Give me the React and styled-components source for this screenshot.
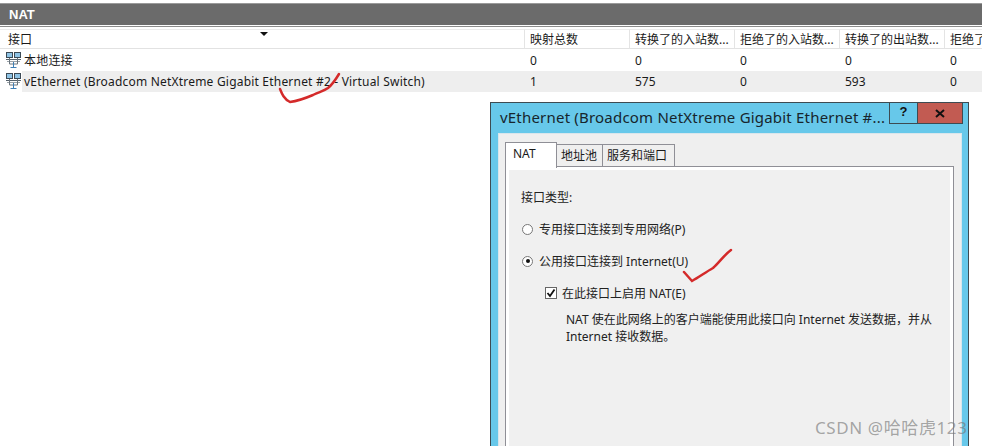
import React from 'react'
import styled, { createGlobalStyle } from 'styled-components'

const Global = createGlobalStyle`
  html, body { margin: 0; padding: 0; background: #fff; overflow: hidden; }
  body { font-family: "Noto Sans", "Noto Sans CJK SC", sans-serif; color: #1a1a1a; }
`
const Page = styled.div`
  position: relative;
  width: 982px;
  height: 446px;
  overflow: hidden;
  background: #fff;
`
const TitleBar = styled.div`
  margin-top: 3px;
  height: 23px;
  box-sizing: border-box;
  border-top: 1px solid #9a9a9a;
  background: #6b6b6b;
  color: #fff;
  font: bold 13px/21px "Liberation Sans", sans-serif;
  padding-left: 9px;
  border-bottom: 1px solid #fff;
  box-shadow: 0 1px 0 #8c8c8c;
`
const Table = styled.div`
  margin-top: 3px;
  display: grid;
  grid-template-columns: 524px 105px 105px 105px 105px 1fr;
  font-size: 12px;
`
const HeadCell = styled.div`
  height: 20px;
  box-sizing: border-box;
  line-height: 20px;
  padding-left: ${p => p.$pad || 5}px;
  white-space: nowrap;
  overflow: hidden;
  position: relative;
  border-left: ${p => (p.$first ? 'none' : '1px solid #e4e4e4')};
  border-top: 1px solid #ececec;
  border-bottom: 1px solid #e2e2e2;
  margin-bottom: 1px;
`
const Sort = styled.span`
  position: absolute;
  left: 260px;
  top: 2px;
  width: 0;
  height: 0;
  border-left: 4px solid transparent;
  border-right: 4px solid transparent;
  border-top: 4px solid #111;
`
const Cell = styled.div`
  height: 21px;
  line-height: 21px;
  padding-left: 6px;
  white-space: nowrap;
  background: ${p => (p.$shaded ? '#eeeeee' : '#fff')};
`
const NameCell = styled(Cell)`
  display: flex;
  align-items: center;
  letter-spacing: 0.2px;
  background: #fff;
`
const NameText = styled.span`
  background: ${p => (p.$shaded ? '#eeeeee' : 'transparent')};
  flex: 1;
  height: 100%;
  padding-left: 2px;
`
const Dialog = styled.div`
  position: absolute;
  left: 490px;
  top: 102px;
  width: 479px;
  height: 350px;
  background: #67c8ea;
  border: 1px solid #3d4b52;
  padding: 0 6px 0 7px;
  box-sizing: border-box;
`
const DialogTitle = styled.div`
  height: 30px;
  font-size: 15px;
  line-height: 28px;
  padding-left: 2px;
  color: #17252c;
  white-space: nowrap;
  letter-spacing: 0.2px;
`
const Controls = styled.div`
  position: absolute;
  top: 0;
  right: 5px;
  display: flex;
  height: 21px;
`
const HelpBtn = styled.div`
  width: 28px;
  box-sizing: border-box;
  border: 1px solid #3d4b52;
  border-top: none;
  border-right: none;
  font: bold 13px/18px "Liberation Sans", sans-serif;
  text-align: center;
  color: #111;
`
const CloseBtn = styled.div`
  width: 46px;
  box-sizing: border-box;
  background: #c25b52;
  border: 1px solid #3d4b52;
  border-top: none;
  display: flex;
  align-items: center;
  justify-content: center;
`
const Body = styled.div`
  background: #efefef;
  height: 320px;
  padding: 8px 7px 0 6px;
  box-sizing: border-box;
  border: 1px solid #d9e6ec;
  border-bottom: none;
`
const Tabs = styled.div`
  display: flex;
  align-items: flex-end;
  height: 24px;
  font-size: 12px;
`
const Tab = styled.div`
  width: ${p => p.$w}px;
  height: ${p => (p.$active ? 26 : 22)}px;
  line-height: ${p => (p.$active ? 21 : 22)}px;
  padding-left: ${p => (p.$active ? 7 : 4)}px;
  background: ${p => (p.$active ? '#fff' : '#efefef')};
  border: 1px solid #8f8f96;
  border-bottom: none;
  margin-left: ${p => (p.$active ? 0 : -1)}px;
  margin-bottom: ${p => (p.$active ? -2 : 0)}px;
  position: relative;
  z-index: ${p => (p.$active ? 2 : 1)};
  box-sizing: border-box;
  white-space: nowrap;
`
const Pane = styled.div`
  border: 1px solid #8f8f96;
  background: #f0f0f0;
  box-shadow: inset 0 0 0 3px #fff;
  height: 290px;
  box-sizing: border-box;
  padding: 23px 0 0 15px;
  font-size: 12px;
  color: #222;
`
const Legend = styled.div`
  line-height: 16px;
  margin-bottom: 15px;
`
const Choice = styled.div`
  display: flex;
  align-items: center;
  height: 16px;
  margin-bottom: 16px;
  gap: 6px;
`
const Radio = styled.span`
  width: 11px;
  height: 11px;
  box-sizing: border-box;
  border-radius: 50%;
  border: 1px solid #777;
  background: #fff;
  margin-left: 1px;
  display: flex;
  align-items: center;
  justify-content: center;
  &::after {
    content: '';
    width: 4px;
    height: 4px;
    border-radius: 50%;
    background: ${p => (p.$on ? '#111' : 'transparent')};
  }
`
const CheckRow = styled(Choice)`
  margin-left: 24px;
  margin-bottom: 10px;
  gap: 5px;
`
const Box = styled.span`
  width: 12px;
  height: 12px;
  box-sizing: border-box;
  border: 1px solid #666;
  background: #fff;
  display: flex;
  align-items: center;
  justify-content: center;
`
const Note = styled.div`
  margin-left: 45px;
  width: 375px;
  line-height: 17px;
`
const Ink = styled.svg`
  position: absolute;
  left: 0;
  top: 0;
  pointer-events: none;
`
const Watermark = styled.div`
  position: absolute;
  left: 815px;
  top: 417px;
  font-size: 17px;
  line-height: 22px;
  color: rgba(120, 120, 120, 0.65);
  white-space: nowrap;
  letter-spacing: 0.6px;
`

const NetIcon = () => (
  <svg width="16" height="18" viewBox="0 0 16 18" fill="none">
    <rect x="0.5" y="0.5" width="6" height="5" fill="#8fc4e6" stroke="#3c4a55" />
    <rect x="8.5" y="0.5" width="6" height="5" fill="#8fc4e6" stroke="#3c4a55" />
    <path d="M0 7.5h15" stroke="#55616b" />
    <path d="M1 9.5h13" stroke="#9aa2a8" />
    <path d="M3.5 6v6M11.5 6v6M3.5 12h8" stroke="#6a747c" />
    <path d="M7.5 10v6M4.5 15.5h6" stroke="#3f7fb5" />
  </svg>
)

const columns = ['映射总数', '转换了的入站数...', '拒绝了的入站数...', '转换了的出站数...', '拒绝了的出站数...']
const rows = [
  { name: '本地连接', values: ['0', '0', '0', '0', '0'] },
  { name: 'vEthernet (Broadcom NetXtreme Gigabit Ethernet #2 - Virtual Switch)', values: ['1', '575', '0', '593', '0'], shaded: true },
]

export default function App() {
  return (
    <Page>
      <Global />
      <TitleBar>NAT</TitleBar>
      <Table>
        <HeadCell $first $pad={8}>接口<Sort /></HeadCell>
        {columns.map(c => <HeadCell key={c}>{c}</HeadCell>)}
        {rows.map(r => (
          <React.Fragment key={r.name}>
            <NameCell>
              <NetIcon />
              <NameText $shaded={r.shaded}>{r.name}</NameText>
            </NameCell>
            {r.values.map((v, i) => <Cell key={i} $shaded={r.shaded}>{v}</Cell>)}
          </React.Fragment>
        ))}
      </Table>

      <Dialog>
        <DialogTitle>vEthernet (Broadcom NetXtreme Gigabit Ethernet #...</DialogTitle>
        <Controls>
          <HelpBtn>?</HelpBtn>
          <CloseBtn>
            <svg width="10" height="9" viewBox="0 0 10 9">
              <path d="M1 1l8 7M9 1l-8 7" stroke="#111" strokeWidth="2" />
            </svg>
          </CloseBtn>
        </Controls>
        <Body>
          <Tabs>
            <Tab $active $w={52}>NAT</Tab>
            <Tab $w={47}>地址池</Tab>
            <Tab $w={73}>服务和端口</Tab>
          </Tabs>
          <Pane>
            <Legend>接口类型:</Legend>
            <Choice><Radio />专用接口连接到专用网络(P)</Choice>
            <Choice><Radio $on />公用接口连接到 Internet(U)</Choice>
            <CheckRow>
              <Box>
                <svg width="10" height="10" viewBox="0 0 10 10">
                  <path d="M1.5 5l2.5 3L8.5 1.5" stroke="#111" strokeWidth="1.8" fill="none" />
                </svg>
              </Box>
              在此接口上启用 NAT(E)
            </CheckRow>
            <Note>NAT 使在此网络上的客户端能使用此接口向 Internet 发送数据，并从 Internet 接收数据。</Note>
          </Pane>
        </Body>
      </Dialog>

      <Ink width="982" height="446" viewBox="0 0 982 446" fill="none">
        <path d="M280 89C282 94 284 99 290 102C298 101 306 98 313 95C319 92 324 91 328 88C333 84 336 79 339 74" stroke="#d42a2a" strokeWidth="2.5" strokeLinecap="round" />
        <path d="M684 272L692 281C699 277 706 272 713 268C719 263 724 255 731 250" stroke="#d42a2a" strokeWidth="2.5" strokeLinecap="round" />
      </Ink>
      <Watermark>CSDN @哈哈虎123</Watermark>
    </Page>
  )
}
